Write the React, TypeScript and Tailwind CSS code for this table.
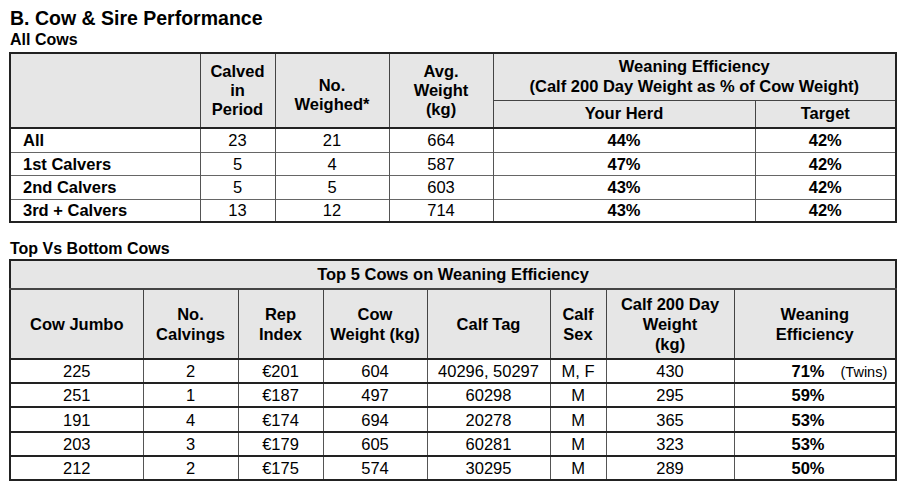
import React from 'react';

// Cow & Sire Performance report section
const herdRows = [
  { label: 'All', calved: 23, weighed: 21, avg: 664, herd: '44%', target: '42%', h: 'h-[24px]' },
  { label: '1st Calvers', calved: 5, weighed: 4, avg: 587, herd: '47%', target: '42%', h: 'h-[23px]' },
  { label: '2nd Calvers', calved: 5, weighed: 5, avg: 603, herd: '43%', target: '42%', h: 'h-[24px]' },
  { label: '3rd + Calvers', calved: 13, weighed: 12, avg: 714, herd: '43%', target: '42%', h: 'h-[23px]' },
];

const topCows = [
  { jumbo: 225, calvings: 2, rep: '€201', weight: 604, tag: '40296, 50297', sex: 'M, F', calf: 430, eff: '71%', note: '(Twins)' },
  { jumbo: 251, calvings: 1, rep: '€187', weight: 497, tag: '60298', sex: 'M', calf: 295, eff: '59%' },
  { jumbo: 191, calvings: 4, rep: '€174', weight: 694, tag: '20278', sex: 'M', calf: 365, eff: '53%' },
  { jumbo: 203, calvings: 3, rep: '€179', weight: 605, tag: '60281', sex: 'M', calf: 323, eff: '53%' },
  { jumbo: 212, calvings: 2, rep: '€175', weight: 574, tag: '30295', sex: 'M', calf: 289, eff: '50%' },
];

const th = 'border border-[#444] font-bold text-center align-middle leading-[19px]';
const td = 'border-x border-[#555] text-center align-middle p-0';

export default function App() {
  return (
    <div className="w-[903px] h-[485px] bg-white text-black font-['Liberation_Sans',Arial,sans-serif] pl-[9px] pt-[7px]">
      <h1 className="pl-[1px] text-[19.5px] leading-[22px] font-bold">B. Cow &amp; Sire Performance</h1>
      <h2 className="pl-[1px] mt-[2px] text-[16px] leading-[18px] font-bold">All Cows</h2>

      <table className="mt-[3px] w-[888px] table-fixed border-collapse border-2 border-[#222] text-[16.5px]">
        <colgroup>
          <col className="w-[190px]" />
          <col className="w-[75px]" />
          <col className="w-[114px]" />
          <col className="w-[104px]" />
          <col className="w-[262px]" />
          <col />
        </colgroup>
        <thead className="bg-[#e6e6e6]">
          <tr className="h-[47px]">
            <th rowSpan={2} className={th + ' border-b-2 border-b-[#222]'}></th>
            <th rowSpan={2} className={th + ' border-b-2 border-b-[#222]'}>Calved<br />in<br />Period</th>
            <th rowSpan={2} className={th + ' border-b-2 border-b-[#222] pt-[8px]'}>No.<br />Weighed*</th>
            <th rowSpan={2} className={th + ' border-b-2 border-b-[#222]'}>Avg.<br />Weight<br />(kg)</th>
            <th colSpan={2} className={th + ' leading-[20px] pb-[2px]'}>
              Weaning Efficiency<br />(Calf 200 Day Weight as % of Cow Weight)
            </th>
          </tr>
          <tr className="h-[28px]">
            <th className={th + ' border-b-2 border-b-[#222]'}>Your Herd</th>
            <th className={th + ' border-b-2 border-b-[#222]'}>Target</th>
          </tr>
        </thead>
        <tbody>
          {herdRows.map((r) => (
            <tr key={r.label} className={r.h + ' border-b border-[#666] leading-[18px]'}>
              <td className={td + ' text-left pl-3 font-bold'}>{r.label}</td>
              <td className={td}>{r.calved}</td>
              <td className={td}>{r.weighed}</td>
              <td className={td}>{r.avg}</td>
              <td className={td + ' font-bold'}>{r.herd}</td>
              <td className={td + ' font-bold'}>{r.target}</td>
            </tr>
          ))}
        </tbody>
      </table>

      <h2 className="pl-[1px] mt-[17px] text-[16px] leading-[18px] font-bold">Top Vs Bottom Cows</h2>

      <table className="mt-[1px] w-[888px] table-fixed border-collapse border-2 border-[#222] text-[16.5px]">
        <colgroup>
          <col className="w-[133px]" />
          <col className="w-[95px]" />
          <col className="w-[85px]" />
          <col className="w-[104px]" />
          <col className="w-[123px]" />
          <col className="w-[56px]" />
          <col className="w-[128px]" />
          <col />
        </colgroup>
        <thead className="bg-[#e6e6e6]">
          <tr className="h-[29px]">
            <th colSpan={8} className={th + ' border-b-2 border-b-[#444]'}>Top 5 Cows on Weaning Efficiency</th>
          </tr>
          <tr className="h-[70px] leading-[20px]">
            <th className={th + ' leading-[20px] border-b-2 border-b-[#222]'}>Cow Jumbo</th>
            <th className={th + ' leading-[20px] border-b-2 border-b-[#222]'}>No.<br />Calvings</th>
            <th className={th + ' leading-[20px] border-b-2 border-b-[#222]'}>Rep<br />Index</th>
            <th className={th + ' leading-[20px] border-b-2 border-b-[#222]'}>Cow<br />Weight (kg)</th>
            <th className={th + ' leading-[20px] border-b-2 border-b-[#222]'}>Calf Tag</th>
            <th className={th + ' leading-[20px] border-b-2 border-b-[#222]'}>Calf<br />Sex</th>
            <th className={th + ' leading-[20px] border-b-2 border-b-[#222]'}>Calf 200 Day<br />Weight<br />(kg)</th>
            <th className={th + ' leading-[20px] border-b-2 border-b-[#222]'}>Weaning<br />Efficiency</th>
          </tr>
        </thead>
        <tbody>
          {topCows.map((c, i) => (
            <tr key={c.jumbo} className={(i === 2 ? 'h-[25px]' : 'h-[24px]') + ' border-b-2 border-[#222] leading-[18px]'}>
              <td className={td}>{c.jumbo}</td>
              <td className={td}>{c.calvings}</td>
              <td className={td}>{c.rep}</td>
              <td className={td}>{c.weight}</td>
              <td className={td}>{c.tag}</td>
              <td className={td}>{c.sex}</td>
              <td className={td}>{c.calf}</td>
              <td className={td + ' text-left pl-[57px]'}>
                <span className="font-bold">{c.eff}</span>
                {c.note && <span className="ml-[16px] text-[14.5px]">{c.note}</span>}
              </td>
            </tr>
          ))}
        </tbody>
      </table>
    </div>
  );
}
